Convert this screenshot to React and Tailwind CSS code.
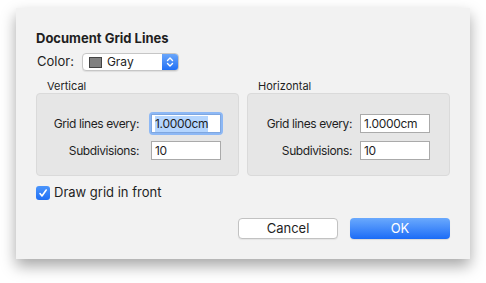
import { useState } from "react";

function Field({ value, focused }) {
  if (focused) {
    return (
      <div className="rounded-[4px] bg-[#8db8f5] p-[2px]">
        <div className="flex h-[19px] w-[70px] items-center border border-[#7fa7e0] bg-white pl-[3px] text-[12px] leading-none tracking-[-0.3px]">
          <span className="bg-[#b4d5fe] py-[2px]">{value}</span>
        </div>
      </div>
    );
  }
  return (
    <div className="flex h-[19px] w-[70px] items-center border border-[#aaaaaa] bg-white pl-[3px] text-[12px] leading-none tracking-[-0.3px]">
      {value}
    </div>
  );
}

function GridGroup({ title, labelWidth, gap, focused }) {
  return (
    <div className="flex w-[203px] flex-col">
      <div className="h-[14px] pl-[11px] text-[11px] leading-[14px]">{title}</div>
      <div className="flex h-[83px] flex-col gap-[8px] rounded-[4px] border border-[#dadada] bg-[#e6e6e6] pt-[20px]">
        <div className="flex items-center" style={{ gap }}>
          <div className="text-right text-[12px] tracking-[-0.4px]" style={{ width: labelWidth }}>
            Grid lines every:
          </div>
          <div className={focused ? "-m-[2px]" : ""}>
            <Field value="1.0000cm" focused={focused} />
          </div>
        </div>
        <div className="flex items-center" style={{ gap }}>
          <div className="text-right text-[12px] tracking-[-0.4px]" style={{ width: labelWidth }}>
            Subdivisions:
          </div>
          <Field value="10" />
        </div>
      </div>
    </div>
  );
}

export default function App() {
  const [front, setFront] = useState(true);

  return (
    <div className="h-[283px] w-[486px] bg-white pl-[16px] pt-[8px] font-['Inter',sans-serif] text-[#1f1f1f]">
      <div className="flex h-[251px] w-[454px] flex-col bg-[#f2f2f2] px-[20px] pt-[22px] shadow-[0_7px_14px_rgba(0,0,0,0.35)]">
        <div className="h-[16px] text-[13px] font-bold leading-[16px]">Document Grid Lines</div>

        <div className="mt-[7px] flex h-[18px] items-center gap-[8px]">
          <span className="pl-[1px] text-[13px]">Color:</span>
          <div className="flex h-[18px] w-[97px] items-stretch overflow-hidden rounded-[4px] border border-[#c6c6c6] bg-white shadow-[0_1px_1px_rgba(0,0,0,0.08)]">
            <div className="flex flex-1 items-center gap-[5px] pl-[6px] text-[12px]">
              <span className="h-[11px] w-[13px] border border-[#444] bg-[#808080]" />
              Gray
            </div>
            <div className="flex w-[16px] items-center justify-center bg-gradient-to-b from-[#6aa6fa] to-[#1e6ff5]">
              <svg width="8" height="12" viewBox="0 0 8 12" fill="none" stroke="white" strokeWidth="1.4" strokeLinecap="round" strokeLinejoin="round">
                <path d="M1.5 4.5 L4 2 L6.5 4.5" />
                <path d="M1.5 7.5 L4 10 L6.5 7.5" />
              </svg>
            </div>
          </div>
        </div>

        <div className="mt-[8px] flex gap-[8px]">
          <GridGroup title="Vertical" labelWidth={102} gap={12} focused />
          <GridGroup title="Horizontal" labelWidth={104} gap={8} />
        </div>

        <label className="mt-[10px] flex h-[14px] items-center gap-[4px]" onClick={() => setFront(!front)}>
          <span className="flex h-[14px] w-[14px] items-center justify-center rounded-[3px] bg-gradient-to-b from-[#4b95fb] to-[#1f6ff5]">
            {front && (
              <svg width="10" height="10" viewBox="0 0 10 10" fill="none" stroke="white" strokeWidth="1.6" strokeLinecap="round" strokeLinejoin="round">
                <path d="M2 5.5 L4 8 L8.2 2" />
              </svg>
            )}
          </span>
          <span className="text-[13px]">Draw grid in front</span>
        </label>

        <div className="mt-[18px] flex justify-end gap-[12px]">
          <button className="h-[21px] w-[100px] rounded-[4px] border border-[#c2c2c2] bg-white text-[13px] leading-none shadow-[0_1px_1px_rgba(0,0,0,0.06)]">
            Cancel
          </button>
          <button className="h-[21px] w-[100px] rounded-[4px] bg-gradient-to-b from-[#6aa9fd] to-[#1a6bf6] text-[13px] leading-none text-white shadow-[0_1px_1px_rgba(0,0,0,0.1)]">
            OK
          </button>
        </div>
      </div>
    </div>
  );
}
